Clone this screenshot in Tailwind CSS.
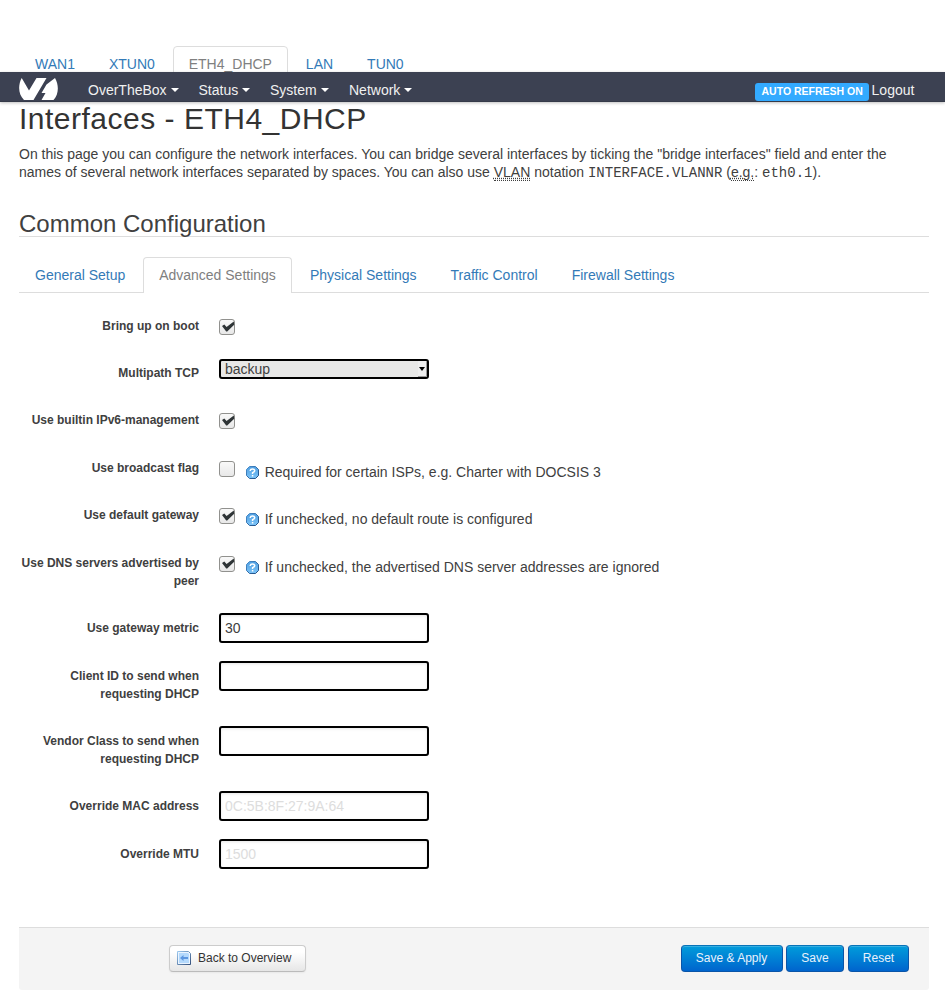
<!DOCTYPE html>
<html lang="en">
<head>
<meta charset="utf-8">
<title>OverTheBox - Interfaces</title>
<script src="https://cdn.jsdelivr.net/npm/@tailwindcss/browser@4"></script>
</head>
<body class="bg-white font-['Liberation_Sans',Arial,sans-serif] text-[14px] leading-[18px] text-[#404040] h-[999px] overflow-hidden">
<svg class="absolute size-0" aria-hidden="true">
  <defs>
    <linearGradient id="hg" x1="0" y1="0" x2="0" y2="1"><stop offset="0" stop-color="#4f9ee0"/><stop offset="1" stop-color="#7cc4f8"/></linearGradient>
    <linearGradient id="hs" x1="0" y1="0" x2="1" y2="1"><stop offset="0" stop-color="#4a90d0"/><stop offset="1" stop-color="#1d4a80"/></linearGradient>
    <linearGradient id="bg" x1="0" y1="0" x2="1" y2="1"><stop offset="0" stop-color="#9cc8ee"/><stop offset="1" stop-color="#34507c"/></linearGradient>
    <symbol id="help" viewBox="0 0 13 13"><path d="M3.500.5h6L12.500 3.500v6L9.500 12.500h-6L.5 9.500v-6z" fill="url(#hg)" stroke="url(#hs)"/><path d="M4.300 5V4.300Q4.500 3 6.500 3T8.700 4.700Q8.700 5.700 6.600 6.600V8M6.600 9v1.400" fill="none" stroke="#fff" stroke-width="1.500"/></symbol>
    <symbol id="check" viewBox="0 0 16 16"><path d="M3 7 5.300 5.400 7.600 8 14.800 2.600 15.200 5.800 8.200 12.400H7.200z" fill="#2e3436"/></symbol>
  </defs>
</svg>

<div class="h-[72px] pt-[46px] pl-[19px] flex overflow-hidden text-[#337ab7] leading-[36px]">
  <span class="px-[16px]">WAN1</span>
  <span class="pl-[18px] pr-[18px]">XTUN0</span>
  <span class="w-[115px] h-[40px] shrink-0 text-center text-[#808080] border border-[#ddd] rounded-t-[4px] leading-[34px]">ETH4_DHCP</span>
  <span class="pl-[18px] pr-[17px]">LAN</span>
  <span class="pl-[17px]">TUN0</span>
</div>

<header class="relative h-[30px] bg-[#3c4152] shadow-[0_1px_3px_rgba(0,0,0,.25),inset_0_-1px_0_rgba(0,0,0,.1)] flex pl-[19px] text-[#f0f0f0] leading-[36px]">
  <svg class="mt-[6px] w-[39px] h-[22px] shrink-0" viewBox="0 0 39 22" fill="#fff"><path d="M2.700 0 10 12.500 17.500 0H27.500L14.500 22H5C-1 16-1 7 2.700 0zM36 0C40 7 40 16 34.500 22H22.500L26.500 15H22.500L27.500 6.500z"/></svg>
  <nav class="flex ml-[30px]">
    <span class="flex w-[110.500px]">OverTheBox<i class="mt-[16px] ml-[4px] w-0 h-0 border-x-4 border-x-transparent border-t-4 border-t-white"></i></span>
    <span class="flex w-[71.500px]">Status<i class="mt-[16px] ml-[4px] w-0 h-0 border-x-4 border-x-transparent border-t-4 border-t-white"></i></span>
    <span class="flex w-[79px]">System<i class="mt-[16px] ml-[4px] w-0 h-0 border-x-4 border-x-transparent border-t-4 border-t-white"></i></span>
    <span class="flex">Network<i class="mt-[16px] ml-[4px] w-0 h-0 border-x-4 border-x-transparent border-t-4 border-t-white"></i></span>
  </nav>
  <div class="ml-auto mr-[30.600px] flex">
    <span class="mt-[11px] mr-[2.400px] w-[114px] h-[18px] rounded-[3px] bg-[#33aaff] text-white font-bold text-[10.500px] leading-[17px] text-center whitespace-nowrap">AUTO REFRESH ON</span>
    <span>Logout</span>
  </div>
</header>

<main class="mx-[19px] w-[910px]">
  <h1 class="h-[43px] text-[30px] leading-[34px] tracking-[0.500px] text-[#333] whitespace-nowrap">Interfaces - ETH4_DHCP</h1>
  <p class="h-[61px]">On this page you can configure the network interfaces. You can bridge several interfaces by ticking the "bridge interfaces" field and enter the<br>names of several network interfaces separated by spaces. You can also use <abbr class="underline decoration-dotted border-b border-dotted border-[#404040]">VLAN</abbr> notation <code class="font-['Liberation_Mono',monospace] text-[14px]">INTERFACE.VLANNR</code> (<abbr class="underline decoration-dotted border-b border-dotted border-[#404040]">e.g.</abbr>: <code class="font-['Liberation_Mono',monospace] text-[14px]">eth0.1</code>).</p>
  <h2 class="h-[31px] border-b border-[#ddd] text-[24px] leading-[36px]">Common Configuration</h2>
  <div class="mt-[20px] h-[36px] border-b border-[#ddd] flex text-[#337ab7] leading-[36px]">
    <span class="w-[124px] pl-[16px]">General Setup</span>
    <span class="w-[149px] h-[36px] text-center text-[#808080] bg-white border border-b-0 border-[#ddd] rounded-t-[4px] leading-[34px]">Advanced Settings</span>
    <span class="pl-[18px] w-[141px]">Physical Settings</span>
    <span class="pl-[17.500px] w-[121px]">Traffic Control</span>
    <span class="pl-[17.700px]">Firewall Settings</span>
  </div>

  <form class="mt-[18px] h-[616px]">
    <div class="flex h-[47px]"><label class="w-[180px] mr-[20px] pt-[6px] text-right text-[12px] font-bold">Bring up on boot</label><span class="mt-[8px] size-[16px] rounded-[3px] border border-[#91918e] bg-linear-to-b from-[#f9f9f9] to-[#e8e8e8]"><svg class="-m-px size-[16px]"><use href="#check"/></svg></span></div>
    <div class="flex h-[47px]"><label class="w-[180px] mr-[20px] pt-[6px] text-right text-[12px] font-bold">Multipath TCP</label>
      <span class="mt-[1px] w-[210px] h-[20px] border-2 border-black rounded-[3px] bg-[#e8e8e7] pl-[4px] leading-[17px] flex justify-between">backup<span class="w-[9px] h-[16px] bg-[#eee] border-r border-b border-[#999] pt-[6px] pl-[1px]"><i class="block w-0 h-0 border-x-[3px] border-x-transparent border-t-[4px] border-t-black"></i></span></span></div>
    <div class="flex h-[48px]"><label class="w-[180px] mr-[20px] pt-[6px] text-right text-[12px] font-bold">Use builtin IPv6-management</label><span class="mt-[8px] size-[16px] rounded-[3px] border border-[#91918e] bg-linear-to-b from-[#f9f9f9] to-[#e8e8e8]"><svg class="-m-px size-[16px]"><use href="#check"/></svg></span></div>
    <div class="flex h-[47px]"><label class="w-[180px] mr-[20px] pt-[6px] text-right text-[12px] font-bold">Use broadcast flag</label><span class="mt-[8px] size-[16px] rounded-[3px] border border-[#91918e] bg-linear-to-b from-[#f9f9f9] to-[#e8e8e8]"></span><svg class="mt-[13px] ml-[11px] mr-[5.700px] size-[13px]"><use href="#help"/></svg><span class="pt-[10px]">Required for certain ISPs, e.g. Charter with DOCSIS 3</span></div>
    <div class="flex h-[47px]"><label class="w-[180px] mr-[20px] pt-[6px] text-right text-[12px] font-bold">Use default gateway</label><span class="mt-[8px] size-[16px] rounded-[3px] border border-[#91918e] bg-linear-to-b from-[#f9f9f9] to-[#e8e8e8]"><svg class="-m-px size-[16px]"><use href="#check"/></svg></span><svg class="mt-[13px] ml-[11px] mr-[5.700px] size-[13px]"><use href="#help"/></svg><span class="pt-[10px]">If unchecked, no default route is configured</span></div>
    <div class="flex h-[66px]"><label class="w-[180px] mr-[20px] pt-[7px] text-right text-[12px] font-bold">Use DNS servers advertised by peer</label><span class="mt-[9px] size-[16px] rounded-[3px] border border-[#91918e] bg-linear-to-b from-[#f9f9f9] to-[#e8e8e8]"><svg class="-m-px size-[16px]"><use href="#check"/></svg></span><svg class="mt-[14px] ml-[11px] mr-[5.700px] size-[13px]"><use href="#help"/></svg><span class="pt-[11px]">If unchecked, the advertised DNS server addresses are ignored</span></div>
    <div class="flex h-[48px]"><label class="w-[180px] mr-[20px] pt-[6px] text-right text-[12px] font-bold">Use gateway metric</label><input class="w-[210px] h-[30px] border-2 border-black rounded-[3px] px-[4px] shadow-[inset_0_1px_3px_rgba(0,0,0,.1)] placeholder:text-[#ddd]" value="30"></div>
    <div class="flex h-[65px]"><label class="w-[180px] mr-[20px] pt-[6px] text-right text-[12px] font-bold">Client ID to send when<br>requesting DHCP</label><input class="w-[210px] h-[30px] border-2 border-black rounded-[3px] px-[4px] shadow-[inset_0_1px_3px_rgba(0,0,0,.1)] placeholder:text-[#ddd]"></div>
    <div class="flex h-[65px]"><label class="w-[180px] mr-[20px] pt-[6px] text-right text-[12px] font-bold">Vendor Class to send when<br>requesting DHCP</label><input class="w-[210px] h-[30px] border-2 border-black rounded-[3px] px-[4px] shadow-[inset_0_1px_3px_rgba(0,0,0,.1)] placeholder:text-[#ddd]"></div>
    <div class="flex h-[48px]"><label class="w-[180px] mr-[20px] pt-[6px] text-right text-[12px] font-bold">Override MAC address</label><input class="w-[210px] h-[30px] border-2 border-black rounded-[3px] px-[4px] shadow-[inset_0_1px_3px_rgba(0,0,0,.1)] placeholder:text-[#ddd]" placeholder="0C:5B:8F:27:9A:64"></div>
    <div class="flex h-[48px]"><label class="w-[180px] mr-[20px] pt-[6px] text-right text-[12px] font-bold">Override MTU</label><input class="w-[210px] h-[30px] border-2 border-black rounded-[3px] px-[4px] shadow-[inset_0_1px_3px_rgba(0,0,0,.1)] placeholder:text-[#ddd]" placeholder="1500"></div>
  </form>

  <footer class="h-[63px] bg-[#f4f4f4] border-t border-[#ddd] rounded-b-[3px] pt-[17px] pl-[150px] pr-[20px] flex text-[12px] leading-[24px]">
    <button type="button" class="w-[137px] h-[27px] border border-[#ccc] border-b-[#bbb] rounded-[4px] bg-linear-to-b from-white from-25% to-[#e6e6e6] shadow-[0_1px_2px_rgba(0,0,0,.05)] flex text-[#333] whitespace-nowrap pl-[7px]">
      <svg class="mt-[5px] mr-[7px] size-[14px]" viewBox="0 0 14 14"><path d="M.5.500h11l2 2v11H.5z" fill="#eaf4ff" stroke="url(#bg)"/><path d="M2 2h9l1 1v9H2z" fill="#b4d9fc"/><path d="M3 7 6.500 4v2H11v2H6.500v2z" fill="#5b96e0"/></svg>Back to Overview</button>
    <button type="button" class="ml-auto w-[102px] h-[27px] rounded-[4px] border border-[#0a55a8] border-t-[#0873b8] bg-linear-to-b from-[#049cdb] to-[#0064cd] shadow-[inset_0_1px_0_rgba(255,255,255,.2)] text-[#e8f2fb] pb-[2px] pr-[1px]">Save &amp; Apply</button>
    <button type="button" class="ml-[3px] w-[58px] h-[27px] rounded-[4px] border border-[#0a55a8] border-t-[#0873b8] bg-linear-to-b from-[#049cdb] to-[#0064cd] shadow-[inset_0_1px_0_rgba(255,255,255,.2)] text-[#e8f2fb] pb-[2px]">Save</button>
    <button type="button" class="ml-[4px] w-[61px] h-[27px] rounded-[4px] border border-[#0a55a8] border-t-[#0873b8] bg-linear-to-b from-[#049cdb] to-[#0064cd] shadow-[inset_0_1px_0_rgba(255,255,255,.2)] text-[#e8f2fb] pb-[2px]">Reset</button>
  </footer>
</main>
</body>
</html>
